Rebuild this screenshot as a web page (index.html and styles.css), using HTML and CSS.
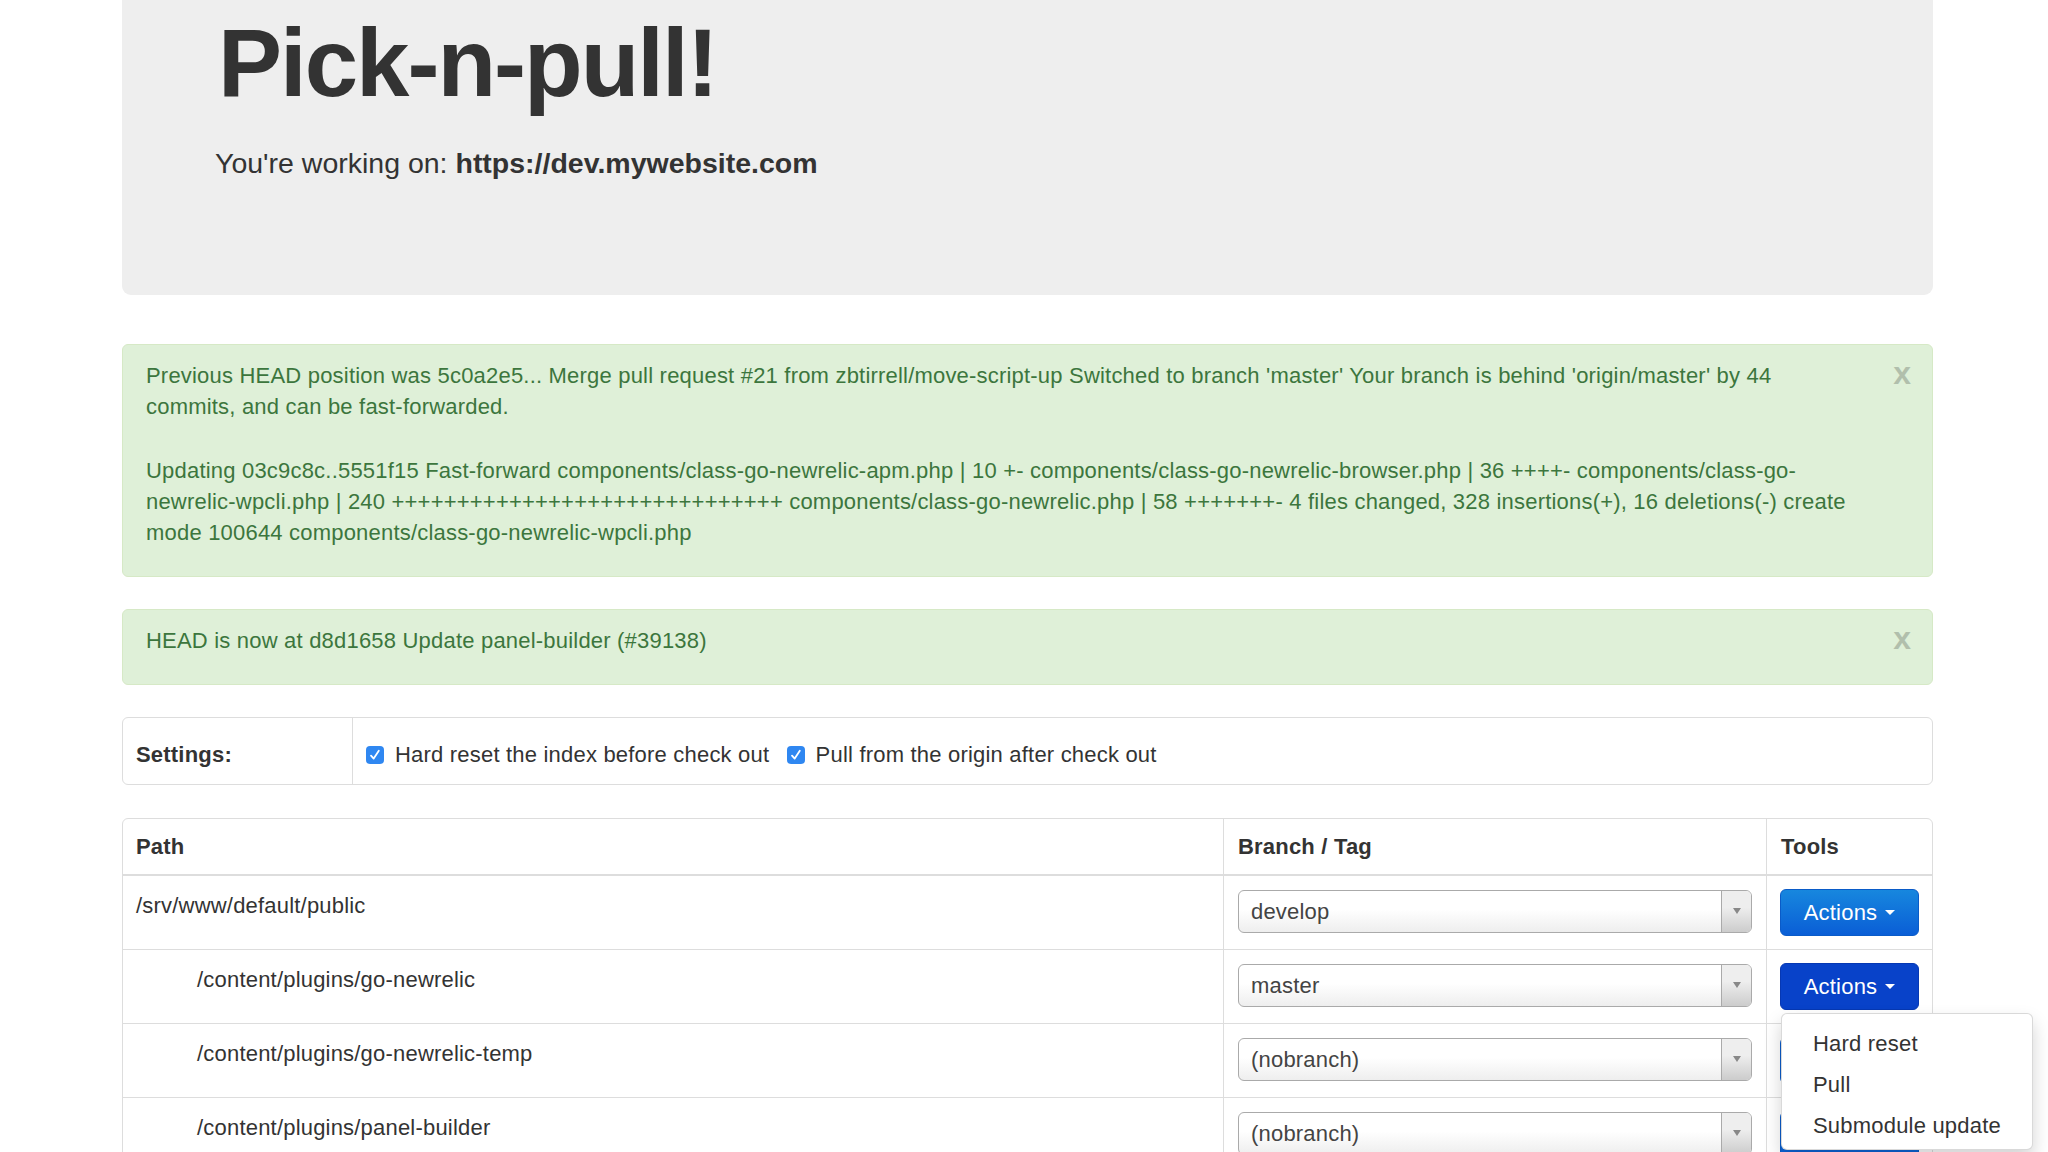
FILE: index.html
```html
<!DOCTYPE html>
<html lang="en">
<head>
<meta charset="utf-8">
<title>Pick-n-pull!</title>
<link rel="stylesheet" href="styles.css">
</head>
<body>
<div class="container">
  <div class="jumbotron">
    <h1>Pick-n-pull!</h1>
    <p class="lead">You're working on: <strong>https://dev.mywebsite.com</strong></p>
  </div>

  <div class="alert">
    <div class="alert-body">
      <p>Previous HEAD position was 5c0a2e5... Merge pull request #21 from zbtirrell/move-script-up Switched to branch 'master' Your branch is behind 'origin/master' by 44 commits, and can be fast-forwarded.</p>
      <p>Updating 03c9c8c..5551f15 Fast-forward components/class-go-newrelic-apm.php | 10 +- components/class-go-newrelic-browser.php | 36 ++++- components/class-go-newrelic-wpcli.php | 240 ++++++++++++++++++++++++++++++ components/class-go-newrelic.php | 58 +++++++- 4 files changed, 328 insertions(+), 16 deletions(-) create mode 100644 components/class-go-newrelic-wpcli.php</p>
    </div>
    <button class="close" type="button">x</button>
  </div>

  <div class="alert">
    <div class="alert-body">
      <p>HEAD is now at d8d1658 Update panel-builder (#39138)</p>
    </div>
    <button class="close" type="button">x</button>
  </div>

  <table class="settings">
    <tr>
      <th class="settings-label">Settings:</th>
      <td class="settings-options">
        <label class="opt"><span class="check"><svg viewBox="0 0 18 18" width="18" height="18"><rect x="0" y="0" width="18" height="18" rx="4" fill="#2f87f1"/><path d="M5 9.6 L7.7 12.6 L12.8 4.8" fill="none" stroke="#fff" stroke-width="1.8" stroke-linecap="round" stroke-linejoin="round"/></svg></span>Hard reset the index before check out</label>
        <label class="opt"><span class="check"><svg viewBox="0 0 18 18" width="18" height="18"><rect x="0" y="0" width="18" height="18" rx="4" fill="#2f87f1"/><path d="M5 9.6 L7.7 12.6 L12.8 4.8" fill="none" stroke="#fff" stroke-width="1.8" stroke-linecap="round" stroke-linejoin="round"/></svg></span>Pull from the origin after check out</label>
      </td>
    </tr>
  </table>

  <table class="repos">
    <colgroup>
      <col class="col-path">
      <col class="col-branch">
      <col class="col-tools">
    </colgroup>
    <thead>
      <tr>
        <th>Path</th>
        <th>Branch / Tag</th>
        <th>Tools</th>
      </tr>
    </thead>
    <tbody>
      <tr>
        <td>/srv/www/default/public</td>
        <td><div class="select"><span class="select-text">develop</span><span class="select-arrow"><span class="tri"></span></span></div></td>
        <td class="tools"><div class="btn-group"><button class="btn" type="button">Actions<span class="caret"></span></button></div></td>
      </tr>
      <tr>
        <td class="child">/content/plugins/go-newrelic</td>
        <td><div class="select"><span class="select-text">master</span><span class="select-arrow"><span class="tri"></span></span></div></td>
        <td class="tools">
          <div class="btn-group open">
            <button class="btn active" type="button">Actions<span class="caret"></span></button>
            <ul class="dropdown-menu">
              <li>Hard reset</li>
              <li>Pull</li>
              <li>Submodule update</li>
            </ul>
          </div>
        </td>
      </tr>
      <tr>
        <td class="child">/content/plugins/go-newrelic-temp</td>
        <td><div class="select"><span class="select-text">(nobranch)</span><span class="select-arrow"><span class="tri"></span></span></div></td>
        <td class="tools"><div class="btn-group"><button class="btn" type="button">Actions<span class="caret"></span></button></div></td>
      </tr>
      <tr>
        <td class="child">/content/plugins/panel-builder</td>
        <td><div class="select"><span class="select-text">(nobranch)</span><span class="select-arrow"><span class="tri"></span></span></div></td>
        <td class="tools"><div class="btn-group"><button class="btn" type="button">Actions<span class="caret"></span></button></div></td>
      </tr>
    </tbody>
  </table>
</div>
</body>
</html>
```

FILE: styles.css
```css
html, body {
  margin: 0;
  padding: 0;
  overflow: hidden;
  height: 100%;
  background: #ffffff;
}

body {
  font-family: "Liberation Sans", Arial, Helvetica, sans-serif;
  font-size: 22px;
  line-height: 31px;
  letter-spacing: 0.2px;
  color: #333333;
}

.container {
  width: 1811px;
  margin-left: 122px;
}

/* Jumbotron */
.jumbotron {
  background: #eeeeee;
  border-radius: 0 0 9px 9px;
  padding: 10px 93px 112px 93px;
  letter-spacing: 0;
}

.jumbotron h1 {
  margin: 0 0 27px 3px;
  font-size: 96px;
  line-height: 106px;
  font-weight: bold;
  letter-spacing: -2px;
  color: #333333;
}

.jumbotron .lead {
  margin: 0;
  font-size: 28.5px;
  line-height: 40px;
  font-weight: 300;
}

.jumbotron .lead strong {
  font-weight: bold;
}

/* Alerts */
.alert {
  display: flex;
  align-items: flex-start;
  margin-top: 32px;
  padding: 15px 21px 28px 23px;
  background: #dff0d8;
  border: 1px solid #d6e9c6;
  border-radius: 6px;
  color: #3c763d;
}

.jumbotron + .alert {
  margin-top: 49px;
}

.alert-body {
  flex: 1;
}

.alert-body p {
  margin: 0 0 33px 0;
}

.alert-body p:last-child {
  margin-bottom: 0;
}

.close {
  flex: none;
  margin: -3px 0 0 38px;
  padding: 0;
  border: 0;
  background: transparent;
  font-family: "Liberation Sans", Arial, sans-serif;
  font-size: 32px;
  line-height: 32px;
  font-weight: bold;
  color: #000000;
  opacity: 0.2;
  cursor: pointer;
}

/* Settings */
.settings {
  width: 100%;
  margin-top: 32px;
  border-collapse: separate;
  border-spacing: 0;
  border: 1px solid #dddddd;
  border-radius: 6px;
}

.settings th,
.settings td {
  padding: 21px 13px 12px 13px;
  text-align: left;
  vertical-align: top;
}

.settings-label {
  width: 203px;
  font-weight: bold;
}

.settings-options {
  border-left: 1px solid #dddddd;
}

.opt {
  display: inline-flex;
  align-items: center;
  margin-right: 11px;
}

.check {
  display: inline-flex;
  width: 18px;
  height: 18px;
  margin-right: 11px;
}

/* Repos table */
.repos {
  width: 100%;
  margin-top: 33px;
  table-layout: fixed;
  border-collapse: separate;
  border-spacing: 0;
  border: 1px solid #dddddd;
  border-radius: 6px;
}

.col-path { width: 1100px; }
.col-branch { width: 543px; }
.col-tools { width: 166px; }

.repos th {
  padding: 12px 13px 12px 13px;
  text-align: left;
  font-weight: bold;
  border-bottom: 2px solid #dddddd;
  vertical-align: bottom;
}

.repos td {
  padding: 14px 14px 16px 13px;
  vertical-align: top;
  border-top: 1px solid #dddddd;
}

.repos tbody tr:first-child td {
  border-top: 0;
}

.repos th + th,
.repos td + td {
  border-left: 1px solid #dddddd;
  padding-left: 14px;
}

.repos td.tools {
  padding-left: 13px;
}

.repos td.child {
  padding-left: 74px;
}

/* Select2-like select */
.select {
  display: flex;
  height: 43px;
  box-sizing: border-box;
  border: 1px solid #aaaaaa;
  border-radius: 6px;
  background: linear-gradient(to top, #eeeeee 0%, #ffffff 55%);
  overflow: hidden;
}

.select-text {
  flex: 1;
  padding-left: 12px;
  line-height: 41px;
  color: #444444;
  white-space: nowrap;
}

.select-arrow {
  flex: none;
  width: 29px;
  display: flex;
  align-items: center;
  justify-content: center;
  border-left: 1px solid #aaaaaa;
  background: linear-gradient(to top, #cccccc 0%, #eeeeee 60%);
}

.tri {
  width: 0;
  height: 0;
  border-left: 4px solid transparent;
  border-right: 4px solid transparent;
  border-top: 6px solid #888888;
}

/* Buttons */
.btn-group {
  position: relative;
  margin: -1px 0 -3px 0;
}

.btn {
  display: block;
  width: 139px;
  height: 47px;
  box-sizing: border-box;
  padding: 7px 0;
  border: 1px solid #0a5bc8;
  border-radius: 6px;
  background: linear-gradient(to bottom, #1787de 0%, #0a5ed6 100%);
  color: #ffffff;
  font-family: "Liberation Sans", Arial, sans-serif;
  font-size: 22px;
  line-height: 31px;
  letter-spacing: 0.2px;
  text-align: center;
  cursor: pointer;
}

.btn.active {
  background: #0842c9;
  border-color: #0638b3;
}

.caret {
  display: inline-block;
  width: 0;
  height: 0;
  margin-left: 8px;
  vertical-align: middle;
  margin-top: -3px;
  border-top: 5px solid #ffffff;
  border-left: 5px solid transparent;
  border-right: 5px solid transparent;
}

/* Dropdown menu */
.dropdown-menu {
  position: absolute;
  top: 100%;
  left: 1px;
  z-index: 10;
  margin: 3px 0 0 0;
  padding: 9px 0 3px 0;
  min-width: 246px;
  list-style: none;
  background: #ffffff;
  border: 1px solid rgba(0, 0, 0, 0.15);
  border-radius: 6px;
  box-shadow: 0 9px 18px rgba(0, 0, 0, 0.175);
}

.dropdown-menu li {
  padding: 5px 31px;
  line-height: 31px;
  color: #333333;
  white-space: nowrap;
}
```
